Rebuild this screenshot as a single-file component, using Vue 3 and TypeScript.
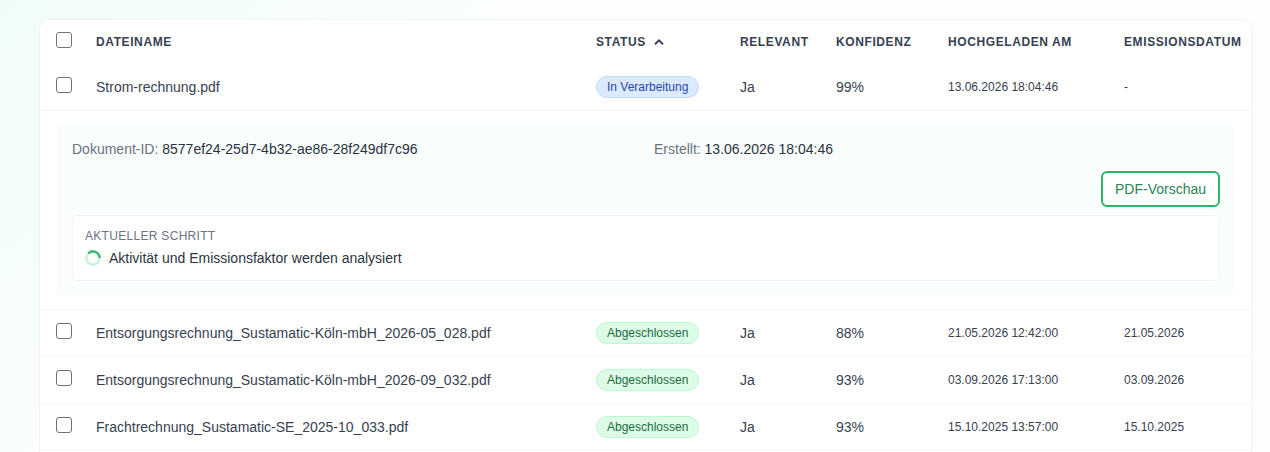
<template>
  <div class="page">
    <div class="card">
      <table class="doc-table">
        <colgroup>
          <col style="width: 40px" />
          <col style="width: 500px" />
          <col style="width: 144px" />
          <col style="width: 96px" />
          <col style="width: 112px" />
          <col style="width: 176px" />
          <col style="width: 144px" />
        </colgroup>
        <thead>
          <tr>
            <th class="check-cell"><input type="checkbox" class="check" /></th>
            <th>Dateiname</th>
            <th>
              <span class="sort-head">
                Status
                <svg class="sort-icon" viewBox="0 0 10 6" width="10" height="6">
                  <path d="M1 5.2 5 1.4 9 5.2" fill="none" stroke="#374151" stroke-width="1.9" />
                </svg>
              </span>
            </th>
            <th>Relevant</th>
            <th>Konfidenz</th>
            <th>Hochgeladen am</th>
            <th>Emissionsdatum</th>
          </tr>
        </thead>
        <tbody>
          <template v-for="doc in documents" :key="doc.name">
            <tr :class="['doc-row', { open: doc.processing }]">
              <td class="check-cell"><input type="checkbox" class="check" /></td>
              <td>{{ doc.name }}</td>
              <td>
                <span :class="['badge', doc.processing ? 'badge-blue' : 'badge-green']">{{ doc.status }}</span>
              </td>
              <td>{{ doc.relevant }}</td>
              <td>{{ doc.confidence }}</td>
              <td class="small">{{ doc.uploaded }}</td>
              <td class="small">{{ doc.emissionDate }}</td>
            </tr>
            <tr v-if="doc.processing" class="detail-row">
              <td colspan="7">
                <div class="detail">
                  <div class="meta">
                    <div><span class="meta-label">Dokument-ID:</span> {{ doc.id }}</div>
                    <div><span class="meta-label">Erstellt:</span> {{ doc.uploaded }}</div>
                  </div>
                  <div class="actions">
                    <button type="button" class="preview-btn">PDF-Vorschau</button>
                  </div>
                  <div class="step">
                    <div class="step-label">Aktueller Schritt</div>
                    <div class="step-text">
                      <svg class="spinner" viewBox="0 0 16 16" width="16" height="16">
                        <circle cx="8" cy="8" r="6.6" fill="none" stroke="#c9f2d9" stroke-width="2.6" />
                        <path d="M3.3 3.4A6.6 6.6 0 0 1 14.6 8" fill="none" stroke="#35b872" stroke-width="2.2" />
                      </svg>
                      Aktivität und Emissionsfaktor werden analysiert
                    </div>
                  </div>
                </div>
              </td>
            </tr>
          </template>
        </tbody>
      </table>
    </div>
  </div>
</template>

<script setup lang="ts">
interface DocRow {
  name: string
  status: string
  processing: boolean
  relevant: string
  confidence: string
  uploaded: string
  emissionDate: string
  id?: string
}

const documents: DocRow[] = [
  {
    name: 'Strom-rechnung.pdf',
    status: 'In Verarbeitung',
    processing: true,
    relevant: 'Ja',
    confidence: '99%',
    uploaded: '13.06.2026 18:04:46',
    emissionDate: '-',
    id: '8577ef24-25d7-4b32-ae86-28f249df7c96'
  },
  {
    name: 'Entsorgungsrechnung_Sustamatic-Köln-mbH_2026-05_028.pdf',
    status: 'Abgeschlossen',
    processing: false,
    relevant: 'Ja',
    confidence: '88%',
    uploaded: '21.05.2026 12:42:00',
    emissionDate: '21.05.2026'
  },
  {
    name: 'Entsorgungsrechnung_Sustamatic-Köln-mbH_2026-09_032.pdf',
    status: 'Abgeschlossen',
    processing: false,
    relevant: 'Ja',
    confidence: '93%',
    uploaded: '03.09.2026 17:13:00',
    emissionDate: '03.09.2026'
  },
  {
    name: 'Frachtrechnung_Sustamatic-SE_2025-10_033.pdf',
    status: 'Abgeschlossen',
    processing: false,
    relevant: 'Ja',
    confidence: '93%',
    uploaded: '15.10.2025 13:57:00',
    emissionDate: '15.10.2025'
  }
]
</script>

<style>
html,
body {
  margin: 0;
  height: 452px;
  overflow: hidden;
}
</style>

<style scoped>
.page {
  height: 452px;
  box-sizing: border-box;
  overflow: hidden;
  padding: 19px 18px 0 39px;
  background: linear-gradient(135deg, #f0fdf6 0%, #fbfefc 30%, #fcfefd 100%);
  font-family: "Liberation Sans", Arial, sans-serif;
  color: #374151;
}

.card {
  min-height: 460px;
  background: #fff;
  border: 1px solid #f3f4f6;
  border-radius: 10px;
  box-shadow: 0 1px 2px rgba(0, 0, 0, 0.03);
}

.doc-table {
  width: 1212px;
  table-layout: fixed;
  border-collapse: collapse;
  font-size: 14px;
}

th {
  height: 44px;
  padding: 0 16px;
  box-sizing: border-box;
  text-align: left;
  font-size: 12px;
  font-weight: 700;
  letter-spacing: 0.6px;
  text-transform: uppercase;
  white-space: nowrap;
  color: #374151;
}

td {
  padding: 0 16px;
  white-space: nowrap;
}

.doc-row td {
  height: 47px;
  box-sizing: border-box;
}

.doc-row.open td {
  height: 46px;
}

.doc-row,
.detail-row {
  border-bottom: 1px solid #f3f4f6;
}

.check-cell {
  padding-right: 0;
}

.check {
  display: block;
  width: 16px;
  height: 16px;
  margin: -4px 0 0;
  appearance: none;
  background: #fff;
  border: 1px solid #6b7280;
  border-radius: 3px;
  box-sizing: border-box;
}

.sort-head {
  display: inline-flex;
  align-items: center;
  gap: 8px;
}

.badge {
  display: inline-block;
  box-sizing: border-box;
  height: 22px;
  line-height: 20px;
  padding: 0 10px;
  border-radius: 11px;
  border: 1px solid;
  font-size: 12px;
}

.badge-blue {
  background: #dbeafe;
  border-color: #bfdbfe;
  color: #2a47a8;
}

.badge-green {
  background: #dcfce7;
  border-color: #bbf7d0;
  color: #1d6b3f;
}

.small {
  font-size: 12px;
}

.detail-row td {
  padding: 13px 17px 14px 17px;
}

.detail {
  box-sizing: border-box;
  height: 171px;
  padding: 16px 15px 14px;
  background: #f9fdfc;
  border-radius: 8px;
  color: #2b3442;
  white-space: normal;
}

.meta {
  display: grid;
  grid-template-columns: 1fr 1fr;
  column-gap: 16px;
  line-height: 18px;
}

.meta-label {
  color: #6b7280;
}

.actions {
  display: flex;
  justify-content: flex-end;
  margin-top: 13px;
}

.preview-btn {
  box-sizing: border-box;
  width: 119px;
  height: 36px;
  padding: 0;
  background: #fff;
  border: 2px solid #2bb56a;
  border-radius: 6px;
  color: #2a8457;
  font-family: inherit;
  font-size: 14px;
}

.step {
  box-sizing: border-box;
  height: 66px;
  margin-top: 8px;
  padding: 13px 12px;
  background: #fff;
  border: 1px solid #f3f4f6;
  border-radius: 6px;
}

.step-label {
  font-size: 12px;
  line-height: 15px;
  letter-spacing: 0.3px;
  text-transform: uppercase;
  color: #6b7280;
}

.step-text {
  display: flex;
  align-items: center;
  gap: 8px;
  margin-top: 5px;
  line-height: 18px;
  color: #2b3442;
}

.spinner {
  flex: none;
}
</style>
